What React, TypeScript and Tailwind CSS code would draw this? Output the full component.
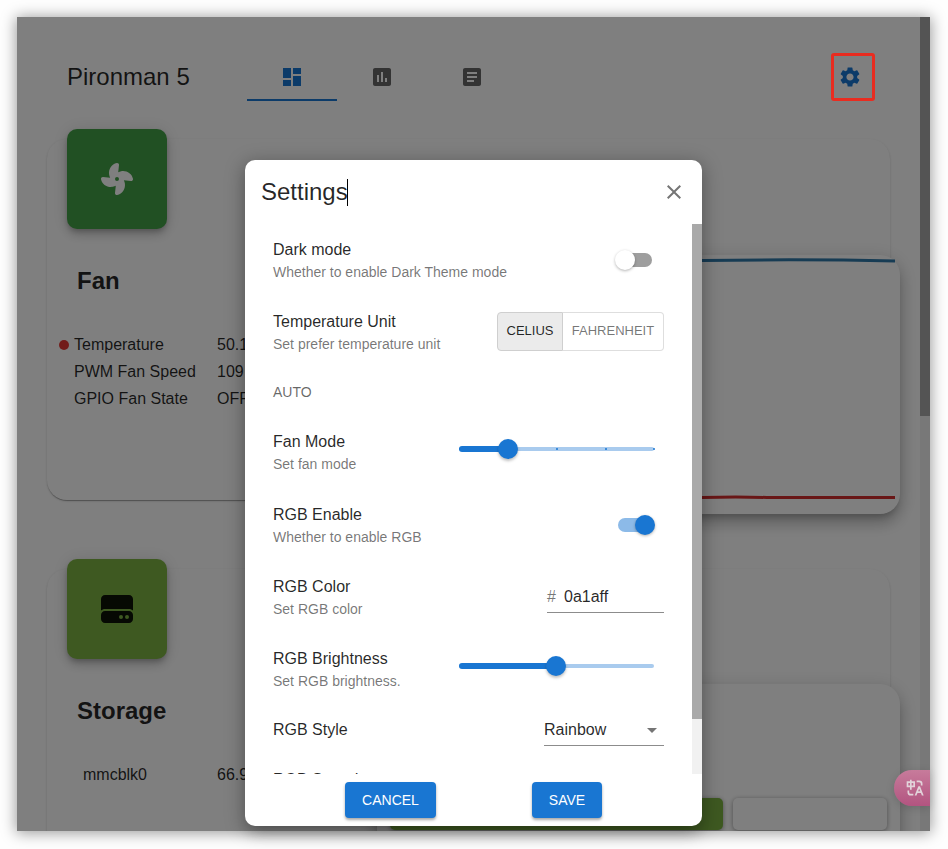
import { useState } from "react";
import type { ReactNode } from "react";
import {
  MdArrowDropDown,
  MdArticle,
  MdAssessment,
  MdClose,
  MdDashboard,
  MdSettings,
} from "react-icons/md";
import { FaFan, FaHardDrive } from "react-icons/fa6";

const panelShadow =
  "shadow-[0_6px_6px_-3px_rgba(0,0,0,0.2),0_10px_14px_1px_rgba(0,0,0,0.14),0_4px_18px_3px_rgba(0,0,0,0.12)]";

type Reading = { label: string; value: string; dot?: boolean };

function Header() {
  return (
    <header className="mx-[30px] mt-9 flex h-12 items-center pl-5">
      <h1 className="w-[180px] text-2xl">Pironman 5</h1>
      <nav className="flex h-full flex-1 text-2xl text-[#666]">
        <button
          aria-label="Dashboard"
          className="flex w-[90px] items-center justify-center border-b-2 border-[#1976d2] pt-0.5 text-[#1976d2]"
        >
          <MdDashboard />
        </button>
        <button aria-label="History" className="flex w-[90px] items-center justify-center">
          <MdAssessment />
        </button>
        <button aria-label="Log" className="flex w-[90px] items-center justify-center">
          <MdArticle />
        </button>
      </nav>
      <button aria-label="Settings" className="mr-7 text-2xl text-[#1976d2]">
        <MdSettings />
      </button>
    </header>
  );
}

function DeviceCard({
  title,
  icon,
  tileClass,
  listClass,
  readings,
  className,
  children,
}: {
  title: string;
  icon: ReactNode;
  tileClass: string;
  listClass: string;
  readings: Reading[];
  className: string;
  children: ReactNode;
}) {
  return (
    <section
      className={`mx-[30px] flex rounded-[20px] bg-white shadow-[0_2px_1px_-1px_rgba(0,0,0,0.2),0_1px_1px_rgba(0,0,0,0.14),0_1px_3px_rgba(0,0,0,0.12)] ${className}`}
    >
      <div className="-mt-2.5 w-[330px] shrink-0">
        <div
          className={`ml-5 flex size-[100px] items-center justify-center rounded-[10px] text-[32px] shadow-[0_3px_5px_-1px_rgba(0,0,0,0.2),0_6px_10px_rgba(0,0,0,0.14),0_1px_18px_rgba(0,0,0,0.12)] ${tileClass}`}
        >
          {icon}
        </div>
        <h2 className="mt-9 ml-[30px] text-2xl leading-8 font-bold">{title}</h2>
        <dl className="mt-[34px] leading-[27px]">
          {readings.map((r) => (
            <div key={r.label} className="flex">
              <dt className={`flex w-[170px] items-center ${listClass}`}>
                <span className={`mr-[5px] size-2.5 rounded-full ${r.dot ? "bg-[#e53935]" : ""}`} />
                {r.label}
              </dt>
              <dd>{r.value}</dd>
            </div>
          ))}
        </dl>
      </div>
      {children}
    </section>
  );
}

function Slider({ id, value, max, marks }: { id: string; value: number; max: number; marks?: boolean }) {
  const [current, setCurrent] = useState(value);
  return (
    <div className="relative mr-2.5 mb-1.5 flex h-5 w-[195px] items-center">
      <span className="absolute h-1 w-full rounded-full bg-[#a9cbee]" />
      <span
        className="absolute h-1.5 rounded-full bg-[#1976d2]"
        style={{ width: `${(current / max) * 100}%` }}
      />
      {marks && (
        <span className="absolute flex w-[196px] justify-between">
          {[0, 1, 2, 3, 4].map((m) => (
            <span key={m} className="size-0.5 rounded-full bg-[#1976d2]" />
          ))}
        </span>
      )}
      <input
        id={id}
        type="range"
        min={0}
        max={max}
        value={current}
        onChange={(e) => setCurrent(Number(e.target.value))}
        className="absolute -left-2.5 h-5 w-[214px] appearance-none bg-transparent [&::-webkit-slider-thumb]:size-5 [&::-webkit-slider-thumb]:appearance-none [&::-webkit-slider-thumb]:rounded-full [&::-webkit-slider-thumb]:bg-[#1976d2] [&::-webkit-slider-thumb]:shadow-[0_2px_3px_rgba(0,0,0,0.25)]"
      />
    </div>
  );
}

function Switch({ id, on }: { id: string; on?: boolean }) {
  return (
    <input
      id={id}
      type="checkbox"
      role="switch"
      defaultChecked={on}
      className="relative mr-3 h-3.5 w-[34px] appearance-none rounded-full bg-[#9e9e9e] before:absolute before:-top-[3px] before:-left-[3px] before:size-5 before:rounded-full before:bg-white before:shadow-[0_1px_3px_rgba(0,0,0,0.3)] checked:bg-[#8cbae8] checked:before:left-[17px] checked:before:bg-[#1976d2]"
    />
  );
}

function SettingRow({
  label,
  hint,
  htmlFor,
  children,
}: {
  label: string;
  hint?: string;
  htmlFor?: string;
  children?: ReactNode;
}) {
  return (
    <div className={`flex items-center justify-between ${hint ? "h-[72px]" : "h-[50px]"}`}>
      <div>
        <label htmlFor={htmlFor} className="block leading-[26px]">
          {label}
        </label>
        {hint && <p className="pb-0.5 text-sm leading-[18px] text-black/55">{hint}</p>}
      </div>
      {children}
    </div>
  );
}

function SettingsDialog() {
  return (
    <div
      role="dialog"
      aria-label="Settings"
      className="flex h-full w-[457px] flex-col overflow-hidden rounded-[10px] bg-white text-black/85 shadow-[0_11px_15px_-7px_rgba(0,0,0,0.2),0_4px_18px_3px_rgba(0,0,0,0.25)]"
    >
      <div className="flex h-16 shrink-0 items-center justify-between px-4">
        <h2 className="flex items-center text-2xl">
          Settings
          <span className="-ml-px h-[27px] w-px bg-black" />
        </h2>
        <button aria-label="Close" className="text-2xl text-[#757575]">
          <MdClose />
        </button>
      </div>
      <div className="flex min-h-0 flex-1">
        <div className="min-w-0 flex-1 overflow-hidden px-7">
          <SettingRow label="Dark mode" hint="Whether to enable Dark Theme mode" htmlFor="dark">
            <Switch id="dark" />
          </SettingRow>
          <SettingRow label="Temperature Unit" hint="Set prefer temperature unit">
            <div className="mb-0.5 flex h-[39px] text-[13px]">
              <button
                aria-pressed="true"
                className="w-[66px] rounded-l border border-[#cfcfcf] bg-[#ebebeb]"
              >
                CELIUS
              </button>
              <button
                aria-pressed="false"
                className="w-[101px] rounded-r border border-l-0 border-[#dedede] text-black/55"
              >
                FAHRENHEIT
              </button>
            </div>
          </SettingRow>
          <h3 className="flex h-12 items-center text-sm text-black/60">AUTO</h3>
          <SettingRow label="Fan Mode" hint="Set fan mode" htmlFor="fan-mode">
            <Slider id="fan-mode" value={1} max={4} marks />
          </SettingRow>
          <div className="pt-px">
            <SettingRow label="RGB Enable" hint="Whether to enable RGB" htmlFor="rgb">
              <Switch id="rgb" on />
            </SettingRow>
            <SettingRow label="RGB Color" hint="Set RGB color" htmlFor="color">
              <div className="flex h-8 w-[117px] items-center border-b border-[#8c8c8c]">
                <span className="w-[17px] shrink-0 text-black/55">#</span>
                <input id="color" defaultValue="0a1aff" className="w-full min-w-0 outline-none" />
              </div>
            </SettingRow>
            <SettingRow label="RGB Brightness" hint="Set RGB brightness." htmlFor="brightness">
              <Slider id="brightness" value={50} max={100} />
            </SettingRow>
            <SettingRow label="RGB Style" htmlFor="style">
              <div className="relative flex h-8 w-[120px] items-center border-b border-[#8c8c8c]">
                <select id="style" className="w-full appearance-none bg-transparent outline-none">
                  <option>Rainbow</option>
                </select>
                <MdArrowDropDown className="pointer-events-none absolute right-0 text-2xl text-[#757575]" />
              </div>
            </SettingRow>
            <SettingRow label="RGB Speed" />
          </div>
        </div>
        <div className="w-2.5 bg-[#f1f1f1]">
          <div className="h-[90%] bg-[#a9a9a9]" />
        </div>
      </div>
      <div className="flex h-[52px] shrink-0 items-center justify-center gap-24 text-sm font-medium text-white">
        <button className="h-9 w-[91px] rounded bg-[#1976d2] shadow-[0_2px_3px_rgba(0,0,0,0.35)]">
          CANCEL
        </button>
        <button className="h-9 w-[70px] rounded bg-[#1976d2] shadow-[0_2px_3px_rgba(0,0,0,0.35)]">
          SAVE
        </button>
      </div>
    </div>
  );
}

function TranslateIcon() {
  return (
    <svg viewBox="0 0 24 24" fill="currentColor" className="size-5">
      <path d="M5 15v2a2 2 0 0 0 2 2h3v2H7a4 4 0 0 1-4-4v-2h2zm13-5l4.400 11h-2.155l-1.201-3h-4.090l-1.199 3h-2.154L16 10h2zm-1 2.885L15.753 16h2.492L17 12.885zM8 2v2h4v7H8v3H6v-3H2V4h4V2h2zm9 1a4 4 0 0 1 4 4v2h-2V7a2 2 0 0 0-2-2h-3V3h3zM6 6H4v3h2V6zm4 0H8v3h2V6z" />
    </svg>
  );
}

export default function App() {
  return (
    <div className="h-screen bg-[#fefefe] pt-[17px] pr-[18px] pb-[18px] pl-[17px] font-['Liberation_Sans',Arial,sans-serif] text-base text-black/85">
      <div className="relative h-full shadow-[0_1px_14px_1px_rgba(0,0,0,0.4)]">
        <div className="flex h-full overflow-hidden bg-white">
          <main className="min-w-0 flex-1 overflow-hidden">
            <Header />
            <DeviceCard
              title="Fan"
              icon={<FaFan />}
              tileClass="bg-[#43a047] text-white"
              listClass="pl-3"
              className="mt-[38px] h-[361px]"
              readings={[
                { label: "Temperature", value: "50.1", dot: true },
                { label: "PWM Fan Speed", value: "109" },
                { label: "GPIO Fan State", value: "OFF" },
              ]}
            >
              <div
                className={`-mr-2.5 mt-[116px] h-[259px] min-w-0 flex-1 rounded-[20px] bg-white ${panelShadow}`}
              >
                <svg className="h-full w-full" viewBox="0 0 523 259" preserveAspectRatio="none">
                  <path d="M0 5.5H325Q430 4 518 6" fill="none" stroke="#2e78a8" strokeWidth="3" />
                  <path d="M0 242.5H325Q360 241.500 390 242.500L518 242.500" fill="none" stroke="#d32f2f" strokeWidth="3" />
                </svg>
              </div>
            </DeviceCard>
            <DeviceCard
              title="Storage"
              icon={<FaHardDrive />}
              tileClass="bg-[#7cb342] text-black/90"
              listClass="pl-[21px]"
              className="mt-[69px] h-[361px]"
              readings={[{ label: "mmcblk0", value: "66.9" }]}
            >
              <div
                className={`-mr-2.5 mt-[115px] h-[259px] min-w-0 flex-1 rounded-[20px] bg-white px-[13px] pt-[114px] ${panelShadow}`}
              >
                <div className="flex h-8 gap-2.5">
                  <div className="flex-1 rounded-[5px] bg-[#7cb342] shadow-[0_1px_5px_rgba(0,0,0,0.4)]" />
                  <div className="w-[154px] rounded-[5px] bg-white shadow-[0_1px_5px_rgba(0,0,0,0.4)]" />
                </div>
              </div>
            </DeviceCard>
          </main>
          <div className="w-2.5 bg-[#f1f1f1]">
            <div className="h-[49%] bg-[#a9a9a9]" />
          </div>
        </div>

        <div className="absolute inset-0 flex justify-center bg-black/50 pt-[143px] pb-[5px]">
          <SettingsDialog />
        </div>
        <div className="absolute top-9 right-[55px] h-12 w-11 rounded-[3px] border-3 border-[#e92c20]" />
        <button
          aria-label="Translate"
          className="absolute right-0 bottom-[25px] flex h-9 w-9 items-center justify-center rounded-l-full bg-linear-to-b from-[#c77b9b] to-[#b25480] pl-1.5 text-[#e2d3da] shadow-[0_2px_8px_rgba(0,0,0,0.15)]"
        >
          <TranslateIcon />
        </button>
      </div>
    </div>
  );
}
